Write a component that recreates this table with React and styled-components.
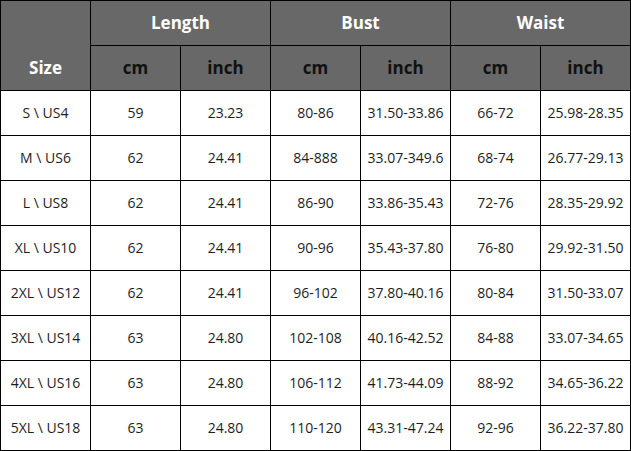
import React from 'react';
import styled, { createGlobalStyle } from 'styled-components';

const rows = [
  ['S \\ US4', '59', '23.23', '80-86', '31.50-33.86', '66-72', '25.98-28.35'],
  ['M \\ US6', '62', '24.41', '84-888', '33.07-349.6', '68-74', '26.77-29.13'],
  ['L \\ US8', '62', '24.41', '86-90', '33.86-35.43', '72-76', '28.35-29.92'],
  ['XL \\ US10', '62', '24.41', '90-96', '35.43-37.80', '76-80', '29.92-31.50'],
  ['2XL \\ US12', '62', '24.41', '96-102', '37.80-40.16', '80-84', '31.50-33.07'],
  ['3XL \\ US14', '63', '24.80', '102-108', '40.16-42.52', '84-88', '33.07-34.65'],
  ['4XL \\ US16', '63', '24.80', '106-112', '41.73-44.09', '88-92', '34.65-36.22'],
  ['5XL \\ US18', '63', '24.80', '110-120', '43.31-47.24', '92-96', '36.22-37.80'],
];

const groups = ['Length', 'Bust', 'Waist'];

function App() {
  return (
    <React.Fragment>
      <GlobalStyle />
      <Chart>
        <SizeHead>Size</SizeHead>
        {groups.map(g => (
          <GroupHead key={g}>{g}</GroupHead>
        ))}
        {groups.map(g => (
          <React.Fragment key={g}>
            <UnitHead>cm</UnitHead>
            <UnitHead>inch</UnitHead>
          </React.Fragment>
        ))}
        {rows.map(row =>
          row.map((value, i) => <Cell key={row[0] + i}>{value}</Cell>)
        )}
      </Chart>
    </React.Fragment>
  );
}

const GlobalStyle = createGlobalStyle`
  body {
    margin: 0;
    background: #ffffff;
    font-family: "Open Sans", "Liberation Sans", sans-serif;
  }
`;

const Chart = styled.div`
  display: grid;
  grid-template-columns: repeat(7, 89px);
  grid-auto-rows: 44px;
  gap: 1px;
  padding: 1px;
  width: max-content;
  background: #000000;
`;

const Cell = styled.div`
  display: flex;
  align-items: center;
  justify-content: center;
  padding-bottom: 2px;
  background: #ffffff;
  color: #1e1e1e;
  font-size: 14px;
`;

const HeadCell = styled(Cell)`
  background: #686868;
  font-size: 17px;
  font-weight: 700;
`;

const SizeHead = styled(HeadCell)`
  grid-row: span 2;
  color: #ffffff;
  padding-top: 45px;
`;

const GroupHead = styled(HeadCell)`
  grid-column: span 2;
  color: #ffffff;
`;

const UnitHead = styled(HeadCell)`
  color: #111111;
`;

export default App;
